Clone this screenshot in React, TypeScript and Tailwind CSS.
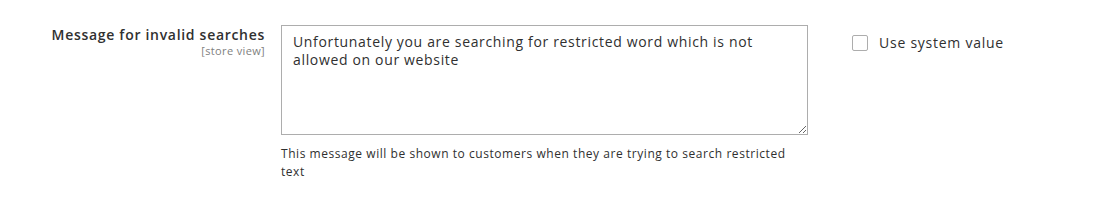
import React from "react";

export default function App() {
  return (
    <div
      className="w-[1102px] h-[204px] bg-white text-[#303030]"
      style={{ fontFamily: '"Open Sans", "Liberation Sans", sans-serif' }}
    >
      <div className="flex items-start pt-[25px]">
        {/* label column */}
        <div className="w-[265px] text-right">
          <div className="text-[14px] leading-[19px] font-semibold tracking-[0.7px]">
            Message for invalid searches
          </div>
          <div className="text-[11px] leading-[14px] text-[#808080] tracking-[0.35px]">
            [store view]
          </div>
        </div>

        {/* value column */}
        <div className="ml-[16px] w-[527px]">
          <textarea
            className="block w-[527px] h-[110px] border border-[#adadad] bg-white px-[11px] pt-[7px] text-[14px] leading-[18px] tracking-[0.66px] text-[#303030] outline-none resize-y"
            defaultValue="Unfortunately you are searching for restricted word which is not allowed on our website"
          />
          <p className="mt-[10px] text-[12px] leading-[18px] tracking-[0.55px] text-[#303030] pr-[10px]">
            This message will be shown to customers when they are trying to search restricted
            text
          </p>
        </div>

        {/* use system value */}
        <label className="ml-[44px] flex items-center gap-[11px] pt-[8px] text-[14px] leading-[19px] tracking-[0.75px] cursor-pointer">
          <span className="w-[16px] h-[16px] border border-[#adadad] rounded-[2px] bg-white" />
          Use system value
        </label>
      </div>
    </div>
  );
}
